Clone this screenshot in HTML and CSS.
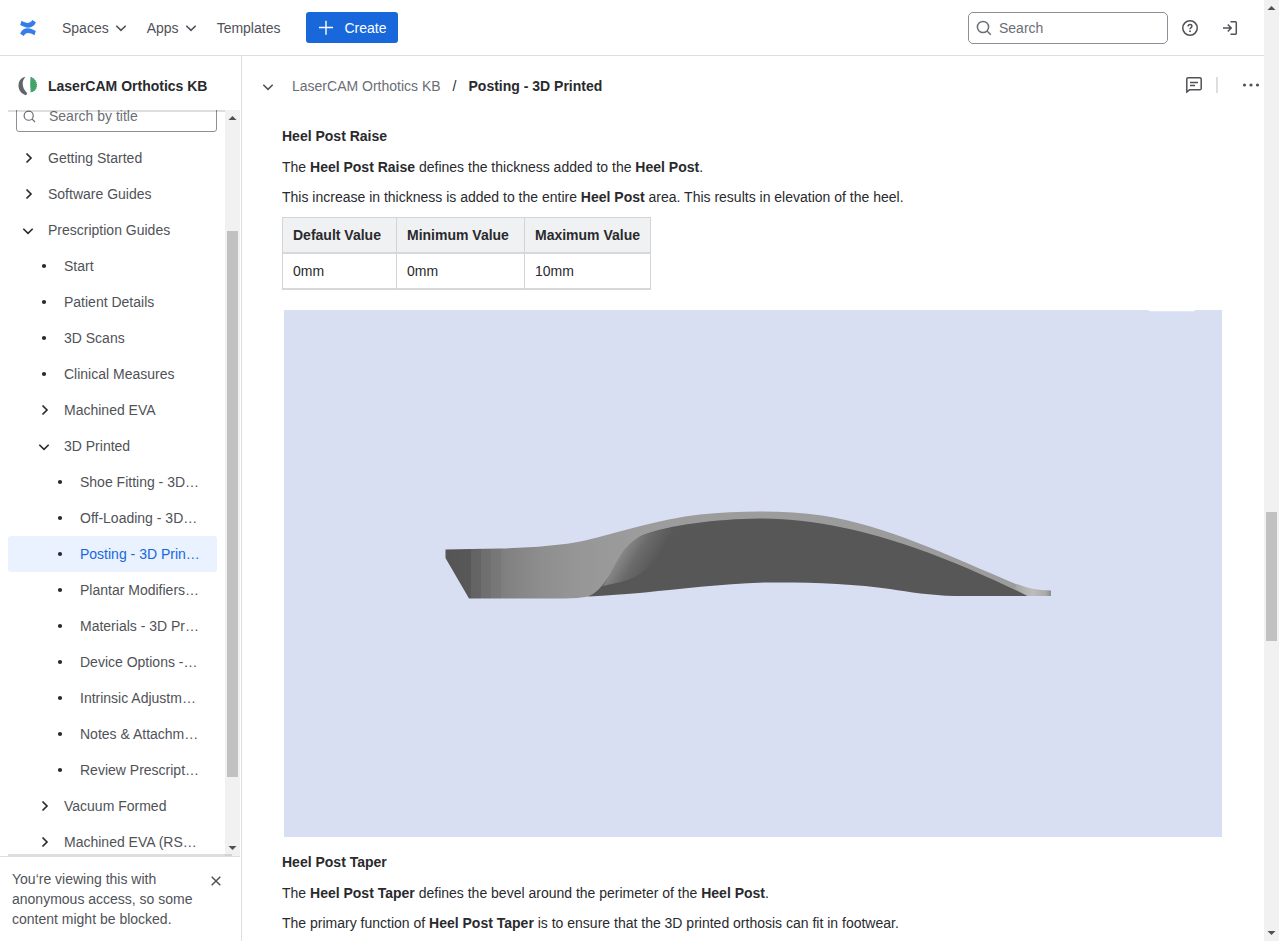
FILE: index.html
```html
<!DOCTYPE html>
<html lang="en">
<head>
<meta charset="utf-8">
<title>Posting - 3D Printed - LaserCAM Orthotics KB</title>
<link rel="stylesheet" href="styles.css">
</head>
<body>
<svg width="0" height="0" class="defs">
  <symbol id="down" viewBox="0 0 16 16"><path d="M3.3 5.8 8 10.4l4.7-4.6" fill="none" stroke="currentColor" stroke-width="1.6"/></symbol>
  <symbol id="right" viewBox="0 0 16 16"><path d="m6.500 3.500 4.500 4.500-4.500 4.500" fill="none" stroke="currentColor" stroke-width="1.7"/></symbol>
  <symbol id="dot" viewBox="0 0 16 16"><circle cx="8" cy="8" r="2.1" fill="currentColor"/></symbol>
  <symbol id="search" viewBox="0 0 16 16"><circle cx="7" cy="7" r="5.600" fill="none" stroke="currentColor" stroke-width="1.5"/><path d="m11 11 3.800 3.800" fill="none" stroke="currentColor" stroke-width="1.5"/></symbol>
  <symbol id="up-arrow" viewBox="0 0 15 15"><path d="M3.5 10h8l-4-4z" fill="#505050"/></symbol>
  <symbol id="down-arrow" viewBox="0 0 15 15"><path d="M3.5 5h8l-4 4z" fill="#505050"/></symbol>
</svg>
<div class="window">
  <div class="app">
    <header class="topbar">
      <svg class="logo" width="16" height="16" viewBox="0 0 16 16"><path d="M.2 5 1.500.8C4 2.200 6 2.900 8 2.900S11.200 1.800 12.200.1L15.900 2.300C14.300 6 11.800 7.700 8.400 7.700 5.600 7.700 2.900 6.400.2 5z" fill="#357de8"/><path d="M15.800 11 14.500 15.200C12 13.800 10 13.100 8 13.100S4.800 14.200 3.800 15.900L.1 13.700C1.700 10 4.200 8.300 7.600 8.300c2.800 0 5.500 1.300 8.200 2.700z" fill="#357de8"/></svg>
      <nav class="nav">
        <a>Spaces<svg class="i16"><use href="#down"/></svg></a>
        <a>Apps<svg class="i16"><use href="#down"/></svg></a>
        <a>Templates</a>
      </nav>
      <button class="create"><svg width="16" height="16" viewBox="0 0 16 16"><path d="M8 .8v14M1 7.500h14" stroke="currentColor" stroke-width="1.400"/></svg>Create</button>
      <div class="search"><svg class="i16"><use href="#search"/></svg>Search</div>
      <svg class="help" width="16" height="16" viewBox="0 0 16 16" fill="none" stroke="currentColor" stroke-width="1.5"><circle cx="8" cy="8" r="7.25"/><path d="M6.100 6.400C6.100 5.200 6.900 4.600 8 4.600S9.900 5.300 9.900 6.300C9.900 7.600 8 7.500 8 9.200"/><circle cx="8" cy="11.200" r=".9" fill="currentColor" stroke="none"/></svg>
      <svg class="login" width="16" height="16" viewBox="0 0 16 16" fill="none" stroke="currentColor" stroke-width="1.5"><path d="M1 8h8M5.800 4.500 9.200 8l-3.400 3.500M8.500 1.700h4.800q1 0 1 1v10.600q0 1-1 1H8.500"/></svg>
    </header>
    <div class="body">
      <aside class="sidebar">
        <div class="space">
          <svg width="22" height="22" viewBox="0 0 22 22"><path d="M8.500 1.800C4 2.500 1.500 6.300 1.500 10.800c0 4.500 3.200 8.300 7.200 9.400 1.300-.5 1.600-1.700.8-2.900C7.300 15 5.700 12.500 5.700 8.800c0-3.200 1.300-5.200 2.800-7z" fill="#626467"/><path d="M13.500 1.800l1.700.4.400 1 1.500.1.200 1.300 1.400.5-.1 1.400 1.200.8-.5 1.200 1 1-.7 1.100.6 1.200-1 .8.200 1.300-1.200.6-.2 1.200-1.400.3-.6 1-1.300-.1-1.200.5C13.900 15 13.200 12.600 13.200 9.600s.3-5 .3-7.800z" fill="#44a368"/></svg>
          <span>LaserCAM Orthotics KB</span>
        </div>
        <div class="scroller">
          <div class="tree-wrap">
            <div class="filter"><svg width="13" height="13"><use href="#search"/></svg>Search by title</div>
            <ul class="tree">
              <li><svg class="i16"><use href="#right"/></svg>Getting Started</li>
              <li><svg class="i16"><use href="#right"/></svg>Software Guides</li>
              <li><svg class="i16 open"><use href="#down"/></svg>Prescription Guides</li>
              <li class="l2"><svg class="i16"><use href="#dot"/></svg>Start</li>
              <li class="l2"><svg class="i16"><use href="#dot"/></svg>Patient Details</li>
              <li class="l2"><svg class="i16"><use href="#dot"/></svg>3D Scans</li>
              <li class="l2"><svg class="i16"><use href="#dot"/></svg>Clinical Measures</li>
              <li class="l2"><svg class="i16"><use href="#right"/></svg>Machined EVA</li>
              <li class="l2"><svg class="i16 open"><use href="#down"/></svg>3D Printed</li>
              <li class="l3"><svg class="i16"><use href="#dot"/></svg>Shoe Fitting - 3D…</li>
              <li class="l3"><svg class="i16"><use href="#dot"/></svg>Off-Loading - 3D…</li>
              <li class="l3 current"><svg class="i16"><use href="#dot"/></svg>Posting - 3D Prin…</li>
              <li class="l3"><svg class="i16"><use href="#dot"/></svg>Plantar Modifiers…</li>
              <li class="l3"><svg class="i16"><use href="#dot"/></svg>Materials - 3D Pr…</li>
              <li class="l3"><svg class="i16"><use href="#dot"/></svg>Device Options -…</li>
              <li class="l3"><svg class="i16"><use href="#dot"/></svg>Intrinsic Adjustm…</li>
              <li class="l3"><svg class="i16"><use href="#dot"/></svg>Notes &amp; Attachm…</li>
              <li class="l3"><svg class="i16"><use href="#dot"/></svg>Review Prescript…</li>
              <li class="l2"><svg class="i16"><use href="#right"/></svg>Vacuum Formed</li>
              <li class="l2"><svg class="i16"><use href="#right"/></svg>Machined EVA (RS…</li>
            </ul>
          </div>
          <div class="scrollbar side-bar"><svg class="i15"><use href="#up-arrow"/></svg><div class="thumb"></div><svg class="i15 end"><use href="#down-arrow"/></svg></div>
          <div class="edge top"></div>
          <div class="edge bottom"></div>
        </div>
        <div class="notice">
          <p>You‘re viewing this with anonymous access, so some content might be blocked.</p>
          <svg width="16" height="16" viewBox="0 0 16 16"><path d="m3.700 3.700 8.600 8.600m0-8.600-8.600 8.600" stroke="currentColor" stroke-width="1.5"/></svg>
        </div>
      </aside>
      <main class="main">
        <div class="crumbs">
          <svg class="i16 open"><use href="#down"/></svg>
          <span class="parent">LaserCAM Orthotics KB</span><span class="slash">/</span><b>Posting - 3D Printed</b>
          <div class="actions">
            <svg width="18" height="18" viewBox="0 0 18 18" fill="none" stroke="currentColor" stroke-width="1.5"><path d="M1.800 16V3q0-1.300 1.300-1.300h11.800q1.300 0 1.300 1.300v9.500q0 1.300-1.300 1.300H4.500z"/><path d="M5 6.500h8M5 9.500h5"/></svg>
            <i></i>
            <svg width="18" height="16" viewBox="0 0 18 16" fill="currentColor"><circle cx="2.500" cy="8" r="1.600"/><circle cx="9" cy="8" r="1.600"/><circle cx="15.500" cy="8" r="1.600"/></svg>
          </div>
        </div>
        <article class="content">
          <h4>Heel Post Raise</h4>
          <p>The <b>Heel Post Raise</b> defines the thickness added to the <b>Heel Post</b>.</p>
          <p>This increase in thickness is added to the entire <b>Heel Post</b> area. This results in elevation of the heel.</p>
          <table>
            <tr><th class="c1">Default Value</th><th class="c2">Minimum Value</th><th class="c3">Maximum Value</th></tr>
            <tr><td>0mm</td><td>0mm</td><td>10mm</td></tr>
          </table>
          <svg class="figure" width="938" height="527" viewBox="284 310 938 527">
            <defs>
              <linearGradient id="heel" gradientUnits="userSpaceOnUse" x1="445" y1="0" x2="640" y2="0">
                <stop offset="0" stop-color="#555"/><stop offset=".135" stop-color="#585858"/>
                <stop offset=".135" stop-color="#636363"/><stop offset=".185" stop-color="#656565"/>
                <stop offset=".185" stop-color="#6e6e6e"/><stop offset=".235" stop-color="#707070"/>
                <stop offset=".235" stop-color="#767676"/><stop offset=".285" stop-color="#787878"/>
                <stop offset=".285" stop-color="#7e7e7e"/><stop offset=".38" stop-color="#868686"/>
                <stop offset=".5" stop-color="#8e8e8e"/><stop offset=".7" stop-color="#979797"/><stop offset="1" stop-color="#9c9c9c"/>
              </linearGradient>
              <linearGradient id="shade" gradientUnits="userSpaceOnUse" x1="619" y1="555" x2="649" y2="573">
                <stop offset="0" stop-color="#8a8a8a"/><stop offset=".45" stop-color="#6b6b6b"/><stop offset="1" stop-color="#575757"/>
              </linearGradient>
              <linearGradient id="toe" x1="0" x2="1"><stop offset="0" stop-color="#a5a5a3"/><stop offset=".5" stop-color="#bdbdbb"/><stop offset=".85" stop-color="#aaa"/><stop offset="1" stop-color="#8c8c8c"/></linearGradient>
            </defs>
            <path d="M284 310h938v527H284z" fill="#d9dff2"/>
            <path d="M1147 310h49l-3 1.300h-42z" fill="#fff"/>
            <path d="M445.500 549.500Q470 549 500 548.500C530 547.500 560 546 585 540.500C620 532 660 519 700 514.500C740 510.500 785 510 822 515.500C885 525 950 556 1018 585L1028 595.500L940 565L760 530L640 560L589 596.500Q578 598.500 565 598.500H469L445.500 558z" fill="url(#heel)"/>
            <path d="M589 596C598 592 605 583 613 570C622 554 630 542 643 535C670 525 715 519 760 518.500C815 518.500 870 532 915 548C955 562 995 580 1028 596H955C930 595.500 910 592 890 589C855 583.500 805 582 765 582.500C720 584 680 589 645 592.500Q615 595 589 596.500z" fill="#575757"/>
            <path d="M603 586C611 574 616 561 624 550C631 542 637 537 645 534.500C655 531 670 528 685 526C680 542 662 558 640 574C628 582 614 583 603 586z" fill="url(#shade)"/>
            <path d="M1017 584Q1031 590 1051 590.500V596h-23l-13-7z" fill="url(#toe)"/>
          </svg>
          <h4>Heel Post Taper</h4>
          <p>The <b>Heel Post Taper</b> defines the bevel around the perimeter of the <b>Heel Post</b>.</p>
          <p>The primary function of <b>Heel Post Taper</b> is to ensure that the 3D printed orthosis can fit in footwear.</p>
        </article>
      </main>
    </div>
  </div>
  <div class="scrollbar page-bar"><svg class="i15"><use href="#up-arrow"/></svg><div class="thumb"></div><svg class="i15 end"><use href="#down-arrow"/></svg></div>
</div>
</body>
</html>
```
FILE: styles.css
```css
* { box-sizing: border-box; }
body {
  margin: 0;
  font: 14px/20px "Liberation Sans", Arial, sans-serif;
  color: #292a2e;
  background: #fff;
  overflow: hidden;
}
p, h4, ul { margin: 0; padding: 0; }
svg { display: block; flex: none; }
.defs { position: absolute; }
.i16 { width: 16px; height: 16px; }
.i15 { width: 15px; height: 15px; }
.window { display: flex; height: 941px; width: 1279px; }
.app { flex: 1; min-width: 0; display: flex; flex-direction: column; }

.topbar {
  height: 56px;
  flex: none;
  display: flex;
  align-items: center;
  padding: 0 26px 0 20px;
  border-bottom: 1px solid #dddee1;
  color: #505258;
}
.nav { display: flex; gap: 18px; margin-left: 26px; }
.nav a { display: flex; align-items: center; gap: 4px; }
.create {
  margin-left: 26px;
  width: 92px;
  height: 31px;
  display: flex;
  align-items: center;
  gap: 10px;
  padding: 0 0 0 12px;
  border: 0;
  border-radius: 3px;
  background: #1868db;
  color: #fff;
  font: inherit;
}
.search {
  margin-left: auto;
  width: 200px;
  height: 32px;
  display: flex;
  align-items: center;
  gap: 7px;
  padding-left: 7px;
  border: 1px solid #8c8f97;
  border-radius: 5px;
  color: #6b6e76;
}
.help { margin-left: 14px; }
.login { margin-left: 24px; }

.body { flex: 1; min-height: 0; display: flex; }
.sidebar {
  width: 242px;
  flex: none;
  display: flex;
  flex-direction: column;
  border-right: 1px solid #dddee1;
}
.space {
  height: 54px;
  flex: none;
  display: flex;
  align-items: center;
  gap: 9px;
  padding: 6px 0 0 17px;
  font-weight: bold;
}
.scroller {
  position: relative;
  height: 746px;
  display: flex;
  overflow: hidden;
  width: 240px;
}
.tree-wrap { width: 225px; padding: 0 8px; }
.filter {
  margin: -10px 0 0 8px;
  width: 201px;
  height: 32px;
  display: flex;
  align-items: center;
  gap: 13px;
  padding-left: 6px;
  border: 1px solid #8c8f97;
  border-radius: 3px;
  color: #6b6e76;
}
.tree { list-style: none; margin-top: 8px; color: #505258; }
.tree li {
  height: 36px;
  display: flex;
  align-items: center;
  gap: 12px;
  padding-left: 12px;
  white-space: nowrap;
  border-radius: 3px;
}
.tree svg { color: #292a2e; }
.open { margin-top: 1px; }
.tree .l2 { padding-left: 28px; }
.tree .l3 { padding-left: 44px; }
.tree .current { background: #e9f2fe; color: #1868db; }
.edge { position: absolute; left: 8px; height: 2px; background: rgba(11, 18, 14, .14); }
.edge.top { top: 0; width: 217px; }
.edge.bottom { bottom: 0; width: 224px; }

.scrollbar { width: 15px; flex: none; display: flex; flex-direction: column; align-items: center; background: #f1f1f1; }
.thumb { width: 11px; background: #c1c1c1; }
.end { margin-top: auto; }
.side-bar .thumb { margin-top: 106px; height: 546px; }
.page-bar .thumb { margin-top: 497px; height: 129px; }

.notice {
  flex: 1;
  width: 240px;
  display: flex;
  justify-content: space-between;
  padding: 12px 16px 0 12px;
  border-top: 1px solid #dddee1;
  color: #505258;
}
.notice p { width: 184px; }
.notice svg { margin-top: 4px; }

.main { flex: 1; min-width: 0; }
.crumbs {
  height: 60px;
  display: flex;
  align-items: center;
  padding: 0 4px 0 18px;
}
.crumbs > svg, .actions { color: #505258; }
.parent { margin-left: 16px; color: #6b6e76; }
.slash { margin: 0 12px; }
.actions { margin: 0 0 2px auto; display: flex; align-items: center; }
.actions i { width: 2px; height: 16px; margin: 0 24px 0 13px; background: #dddee1; }

.content { padding: 10px 40px 0; }
h4 { font-size: 14px; margin-bottom: 11px; }
.content p { margin-bottom: 10px; }
table { table-layout: fixed; width: 369px; border-collapse: separate; border-spacing: 0; border-left: 1px solid #d3d4d6; border-top: 1px solid #d3d4d6; }
th, td { height: 36px; padding: 0 10px; text-align: left; white-space: nowrap; border-right: 1px solid #d3d4d6; border-bottom: 2px solid #d7d8da; }
th { background: #f0f1f2; }
.c1 { width: 114px; }
.c2 { width: 128px; }
.c3 { width: 126px; }
.figure { margin: 20px 0 15px 2px; }
```
